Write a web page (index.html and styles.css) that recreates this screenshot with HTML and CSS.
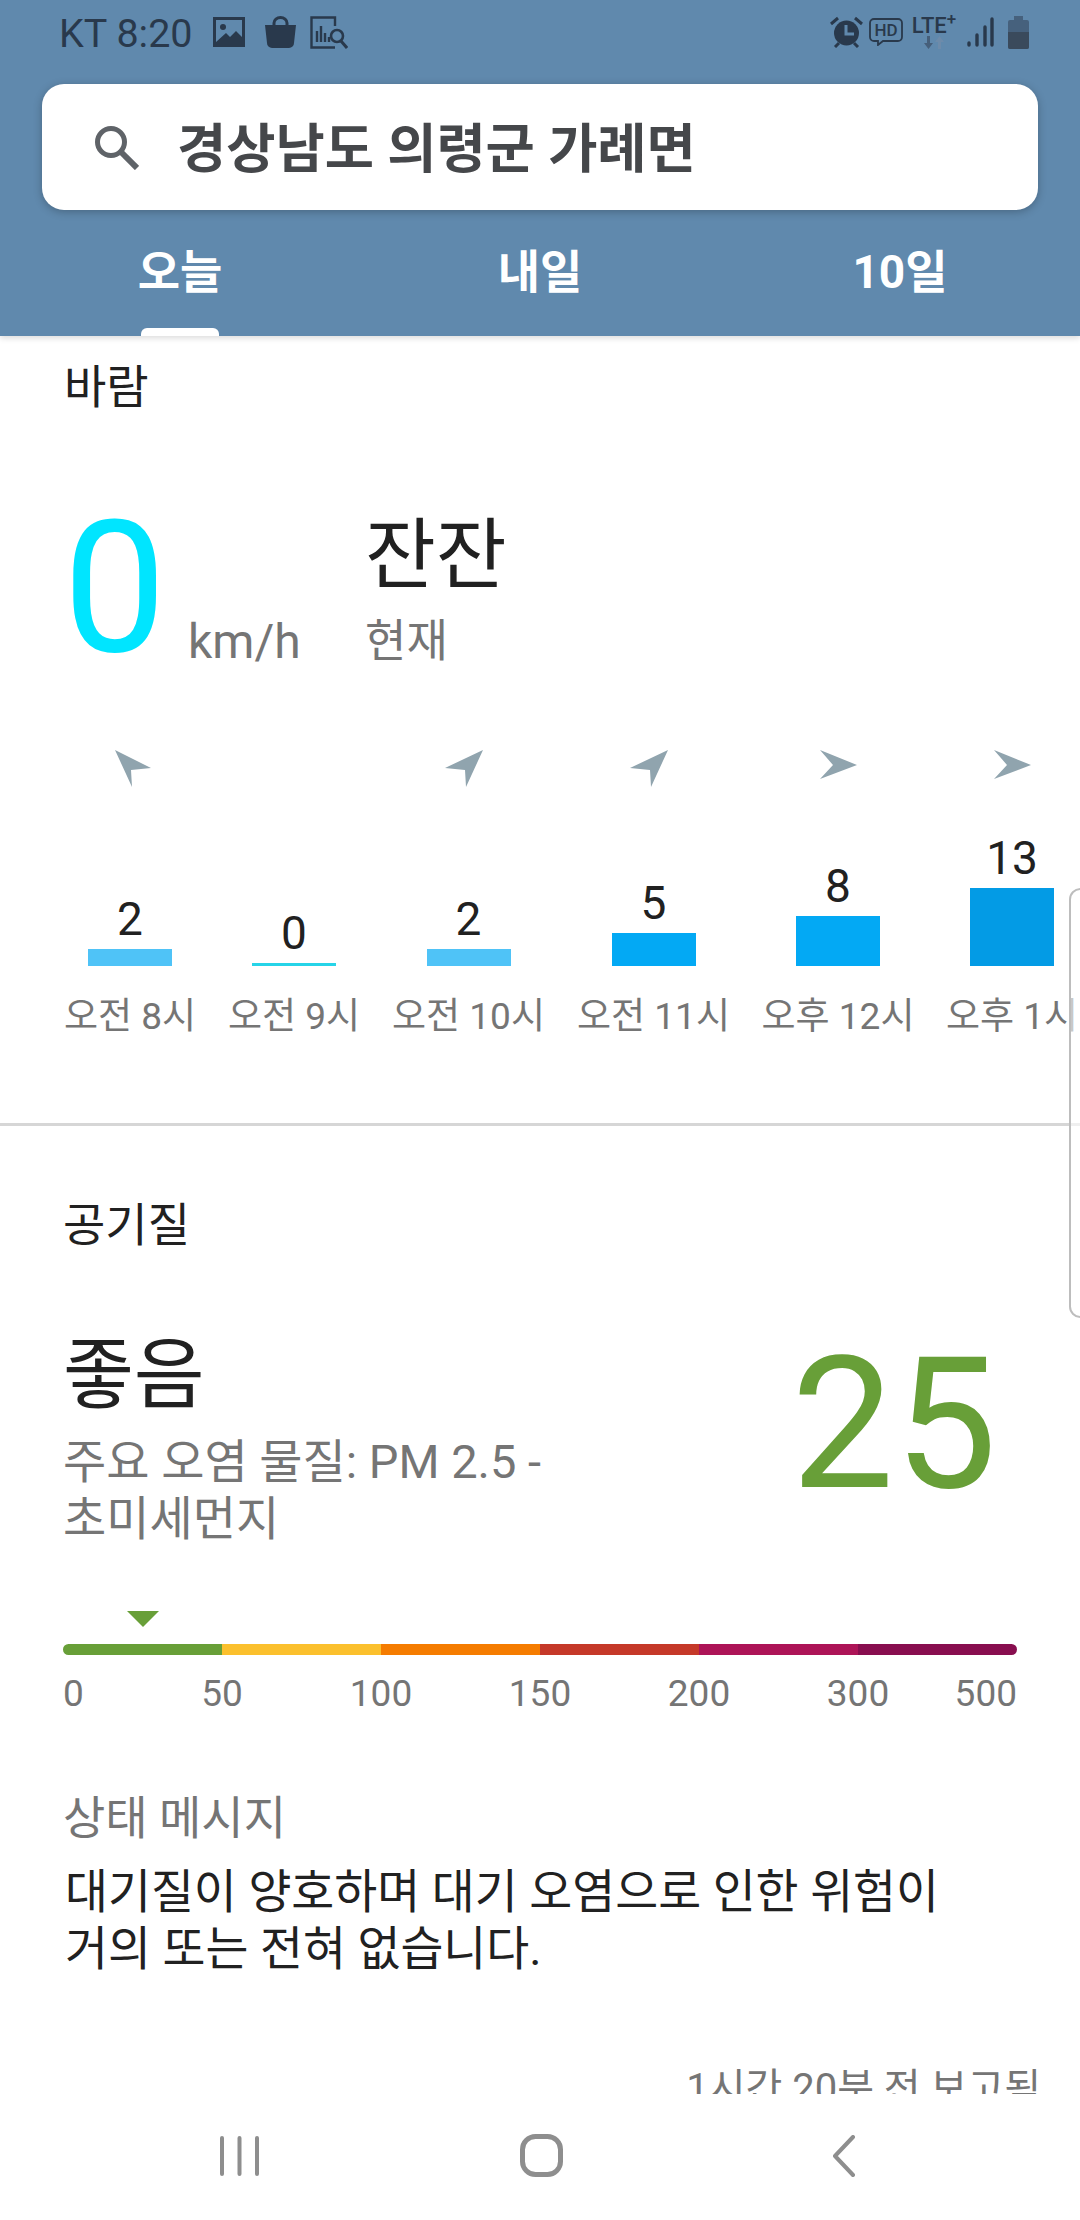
FILE: index.html
```html
<!DOCTYPE html>
<html lang="ko">
<head>
    <meta charset="UTF-8">
    <meta name="viewport" content="width=device-width, initial-scale=1.0">
    <title>바람 및 공기질</title>
    <link rel="stylesheet" href="styles.css">
</head>
<body>
    <div class="screen">

        <header class="top">
            <div class="status">
                <div class="status-left">
                    <span class="status-time">KT 8:20</span>
                    <svg class="ic-image" width="32" height="30" viewBox="0 0 32 30"><path fill="#29394c" d="M0 0h32v30H0z"/><path fill="#6089ad" d="M3 3h26v17l-6-6-6 6-4-4-10 9z"/><circle cx="10" cy="10" r="3" fill="#29394c"/></svg>
                    <svg class="ic-bag" width="31" height="32" viewBox="0 0 31 32"><path fill="none" stroke="#29394c" stroke-width="3" d="M9 10V7a6.500 5.500 0 0 1 13 0v3"/><path fill="#29394c" d="M0 9h31l-2 18a5 5 0 0 1-5 5H7a5 5 0 0 1-5-5z"/></svg>
                    <svg class="ic-chart" width="38" height="33" viewBox="0 0 38 33"><path fill="none" stroke="#29394c" stroke-width="2.400" d="M25 10V1.500H1.500v30H25"/><path fill="none" stroke="#29394c" stroke-width="2.400" d="M7 26V15M11 26V10M15 26V17M19 26v-5"/><circle cx="27" cy="20" r="6" fill="none" stroke="#29394c" stroke-width="2.600"/><path stroke="#29394c" stroke-width="3" d="M31 25l6 7"/></svg>
                </div>
                <div class="status-right">
                    <svg width="33" height="32" viewBox="0 0 33 32"><circle cx="16.500" cy="17" r="12.500" fill="#29394c"/><path stroke="#6089ad" stroke-width="3" fill="none" d="M16 9v9h8"/><path stroke="#29394c" stroke-width="3" fill="none" d="M1 8l7-6M32 8l-7-6M5 31l4-4M28 31l-4-4"/></svg>
                    <svg width="34" height="28" viewBox="0 0 34 28"><path fill="none" stroke="#29394c" stroke-width="1.800" d="M5 1h24a4 4 0 0 1 4 4v14a4 4 0 0 1-4 4H14l-5 4v-4H5a4 4 0 0 1-4-4V5a4 4 0 0 1 4-4z"/><text x="17" y="18" class="hd-text">HD</text></svg>
                    <div class="lte">
                        <span class="lte-text">LTE<sup>+</sup></span>
                        <svg width="20" height="13" viewBox="0 0 20 13"><path fill="#465f7a" d="M3 0h3v7h3l-4.500 6L0 7h3z"/><path fill="#6d8baa" d="M14 13h3V6h3l-4.500-6L11 6h3z"/></svg>
                    </div>
                    <svg width="27" height="30" viewBox="0 0 27 30"><g stroke="#29394c" stroke-width="3.400" stroke-linecap="round"><path d="M2 28v-2M10 28V18M18 28V10M25 28V2"/></g></svg>
                    <svg class="ic-battery" width="21" height="33" viewBox="0 0 21 33"><path fill="#46617d" d="M6 0h9v4h4a2 2 0 0 1 2 2v25a2 2 0 0 1-2 2H2a2 2 0 0 1-2-2V6a2 2 0 0 1 2-2h4z"/><path fill="#3a4a5c" d="M0 16h21v15a2 2 0 0 1-2 2H2a2 2 0 0 1-2-2z"/></svg>
                </div>
            </div>

            <div class="search">
                <svg class="search-icon" width="46" height="46" viewBox="0 0 46 46"><circle cx="18" cy="18" r="13.500" fill="none" stroke="#5f6368" stroke-width="5"/><path stroke="#5f6368" stroke-width="6" d="M28 28l16 16"/></svg>
                <span class="search-text">경상남도 의령군 가례면</span>
            </div>

            <nav class="tabs">
                <div class="tab tab-active">오늘</div>
                <div class="tab">내일</div>
                <div class="tab">10일</div>
            </nav>
        </header>

        <main class="content">
            <section class="wind">
                <h2 class="section-title">바람</h2>

                <div class="wind-now">
                    <div class="wind-speed">0</div>
                    <div class="wind-unit">km/h</div>
                    <div class="wind-desc">
                        <div class="wind-word">잔잔</div>
                        <div class="wind-when">현재</div>
                    </div>
                </div>

                <div class="hours">
                    <div class="hour">
                        <div class="arrow-slot"><svg class="arrow arrow-nw" width="36" height="37" viewBox="0 0 36 37"><path d="M0 0l36 18-20 2 1 17z"/></svg></div>
                        <div class="bar-slot"><span class="val">2</span><div class="bar bar-2"></div></div>
                        <div class="hour-label">오전 8시</div>
                    </div>
                    <div class="hour">
                        <div class="arrow-slot"></div>
                        <div class="bar-slot"><span class="val">0</span><div class="bar bar-0"></div></div>
                        <div class="hour-label">오전 9시</div>
                    </div>
                    <div class="hour">
                        <div class="arrow-slot"><svg class="arrow arrow-ne" width="38" height="37" viewBox="0 0 38 37"><path d="M38 0L0 18l20 2 1 17z"/></svg></div>
                        <div class="bar-slot"><span class="val">2</span><div class="bar bar-2"></div></div>
                        <div class="hour-label">오전 10시</div>
                    </div>
                    <div class="hour">
                        <div class="arrow-slot"><svg class="arrow arrow-ne" width="38" height="37" viewBox="0 0 38 37"><path d="M38 0L0 18l20 2 1 17z"/></svg></div>
                        <div class="bar-slot"><span class="val">5</span><div class="bar bar-5"></div></div>
                        <div class="hour-label">오전 11시</div>
                    </div>
                    <div class="hour">
                        <div class="arrow-slot arrow-slot-flat"><svg class="arrow" width="37" height="29" viewBox="0 0 37 29"><path d="M0 0l37 15L0 29l13-14z"/></svg></div>
                        <div class="bar-slot"><span class="val">8</span><div class="bar bar-8"></div></div>
                        <div class="hour-label">오후 12시</div>
                    </div>
                    <div class="hour">
                        <div class="arrow-slot arrow-slot-flat"><svg class="arrow" width="37" height="29" viewBox="0 0 37 29"><path d="M0 0l37 15L0 29l13-14z"/></svg></div>
                        <div class="bar-slot"><span class="val">13</span><div class="bar bar-13"></div></div>
                        <div class="hour-label">오후 1시</div>
                    </div>
                </div>
            </section>

            <section class="air">
                <h2 class="section-title">공기질</h2>

                <div class="air-main">
                    <div class="air-text">
                        <div class="air-word">좋음</div>
                        <div class="air-sub">주요 오염 물질: PM 2.5 -<br>초미세먼지</div>
                    </div>
                    <div class="air-num">25</div>
                </div>

                <div class="scale">
                    <div class="scale-mark"></div>
                    <div class="scale-bar">
                        <div class="seg seg-1"></div>
                        <div class="seg seg-2"></div>
                        <div class="seg seg-3"></div>
                        <div class="seg seg-4"></div>
                        <div class="seg seg-5"></div>
                        <div class="seg seg-6"></div>
                    </div>
                    <div class="scale-nums">
                        <span class="num-first">0</span><span>50</span><span>100</span><span>150</span><span>200</span><span>300</span><span class="num-last">500</span>
                    </div>
                </div>

                <div class="msg-title">상태 메시지</div>
                <p class="msg">대기질이 양호하며 대기 오염으로 인한 위험이<br>거의 또는 전혀 없습니다.</p>
                <div class="reported">1시간 20분 전 보고됨</div>
            </section>

            <div class="edge-handle"></div>
        </main>

        <footer class="navbar">
            <svg width="40" height="40" viewBox="0 0 40 40"><path stroke="#8e8e8e" stroke-width="4" stroke-linecap="round" d="M2 2v36M19.500 2v36M37 2v36"/></svg>
            <svg width="44" height="44" viewBox="0 0 44 44"><rect x="2.500" y="2.500" width="38" height="38" rx="13" fill="none" stroke="#8e8e8e" stroke-width="5"/></svg>
            <svg class="nav-back" width="24" height="42" viewBox="0 0 24 42"><path fill="none" stroke="#8e8e8e" stroke-width="4" stroke-linecap="round" stroke-linejoin="round" d="M21 2L3 21l18 19"/></svg>
        </footer>

    </div>
</body>
</html>
```

FILE: styles.css
```css
* {
    box-sizing: border-box;
}

html, body {
    margin: 0;
    padding: 0;
}

body {
    font-family: Roboto, "Noto Sans CJK KR", sans-serif;
    background-color: white;
}

.screen {
    width: 1080px;
    height: 2220px;
    display: flex;
    flex-direction: column;
    overflow: hidden;
}

/* Blue header */
.top {
    height: 336px;
    flex-shrink: 0;
    background-color: #6089ad;
    box-shadow: 0 2px 6px rgba(0, 0, 0, 0.15);
    position: relative;
    z-index: 2;
}

.status {
    height: 68px;
    padding: 0 51px 4px 59px;
    display: flex;
    justify-content: space-between;
    align-items: center;
}

.status-left, .status-right {
    display: flex;
    align-items: center;
}

.status-left {
    gap: 20px;
}

.status-right {
    gap: 6px;
}

.ic-chart {
    margin-left: -6px;
}

.ic-battery {
    margin-left: 8px;
}

.status-time {
    padding-top: 4px;
    font-size: 39.5px;
    line-height: 46px;
    color: #29394c;
}

.hd-text {
    font-size: 17px;
    font-weight: 500;
    fill: #29394c;
    text-anchor: middle;
}

.lte {
    width: 50px;
    display: flex;
    flex-direction: column;
    align-items: center;
    margin-right: 2px;
}

.lte-text {
    font-size: 22px;
    line-height: 20px;
    font-weight: 500;
    color: #29394c;
    white-space: nowrap;
}

.lte-text sup {
    font-size: 17px;
    line-height: 0;
}

.search {
    height: 126px;
    margin: 16px 42px 0;
    padding-left: 51px;
    display: flex;
    align-items: center;
    gap: 38px;
    background-color: white;
    border-radius: 22px;
    box-shadow: 0 2px 8px rgba(0, 0, 0, 0.25);
}

.search-text {
    padding-bottom: 6px;
    font-size: 53.5px;
    font-weight: 700;
    color: #45474a;
    white-space: nowrap;
}

.tabs {
    display: flex;
    height: 126px;
}

.tab {
    flex: 1;
    padding-top: 31px;
    text-align: center;
    font-size: 46px;
    line-height: 62px;
    font-weight: 700;
    color: white;
    position: relative;
}

.tab-active::after {
    content: "";
    position: absolute;
    left: 141px;
    bottom: 0;
    width: 78px;
    height: 8px;
    background-color: white;
    border-radius: 6px 6px 0 0;
}

/* Scrolling content */
.content {
    flex: 1;
    overflow: hidden;
    position: relative;
}

.section-title {
    margin: 0;
    font-size: 46px;
    line-height: 50px;
    font-weight: 400;
    color: #212121;
}

.wind {
    height: 790px;
    padding: 26px 0 0 64px;
    border-bottom: 3px solid #d6d6d6;
}

.wind-now {
    height: 235px;
    margin-top: 91px;
    display: flex;
    align-items: flex-start;
}

.wind-speed {
    width: 125px;
    margin: -5px 0 0 -1px;
    font-size: 184px;
    line-height: 180px;
    color: #00e5ff;
}

.wind-unit {
    width: 177px;
    padding-top: 111px;
    font-size: 48px;
    line-height: 56px;
    color: #757575;
}

.wind-desc {
    padding-top: 8px;
}

.wind-word {
    font-size: 77px;
    line-height: 90px;
    color: #212121;
}

.wind-when {
    margin-top: 11px;
    font-size: 45px;
    line-height: 60px;
    color: #757575;
}

.hours {
    margin-left: -64px;
    width: 1080px;
    padding-left: 48px;
    display: grid;
    grid-template-columns: 164px 164px 185px 185px 184px 164px;
}

.hour {
    display: flex;
    flex-direction: column;
    align-items: center;
}

.arrow-slot {
    height: 60px;
    display: flex;
    align-items: center;
    justify-content: center;
}

.arrow-slot-flat {
    padding-bottom: 8px;
}

.arrow {
    fill: #90a4ae;
}

.arrow-nw {
    margin-left: 6px;
}

.arrow-ne {
    margin-right: 9px;
}

.bar-slot {
    height: 168px;
    display: flex;
    flex-direction: column;
    justify-content: flex-end;
    align-items: center;
}

.val {
    font-size: 46px;
    line-height: 54px;
    margin-bottom: 3px;
    color: #212121;
}

.bar {
    width: 84px;
}

.bar-0 {
    height: 3px;
    background-color: #26d4e8;
}

.bar-2 {
    height: 17px;
    background-color: #4fc3f7;
}

.bar-5 {
    height: 33px;
    background-color: #03a9f4;
}

.bar-8 {
    height: 50px;
    background-color: #03a9f4;
}

.bar-13 {
    height: 78px;
    background-color: #039be5;
}

.hour-label {
    margin-top: 29px;
    font-size: 37px;
    line-height: 44px;
    color: #757575;
    white-space: nowrap;
}

/* Air quality */
.air {
    padding: 74px 62px 0 63px;
}

.air-main {
    margin-top: 84px;
    display: flex;
    justify-content: space-between;
    align-items: flex-start;
}

.air-word {
    font-size: 77px;
    line-height: 84px;
    color: #212121;
}

.air-sub {
    margin-top: 15px;
    font-size: 47px;
    line-height: 57px;
    color: #757575;
    white-space: nowrap;
}

.air-num {
    margin: 6px 21px 0 0;
    font-size: 183px;
    line-height: 170px;
    color: #689f38;
}

.scale {
    margin-top: 64px;
}

.scale-mark {
    width: 0;
    height: 0;
    margin-left: 64px;
    border-left: 16.5px solid transparent;
    border-right: 16.5px solid transparent;
    border-top: 16px solid #689f38;
}

.scale-bar {
    margin-top: 17px;
    height: 11px;
    width: 954px;
    display: flex;
    border-radius: 6px;
    overflow: hidden;
}

.seg {
    flex: 1;
}

.seg-1 {
    background-color: #689f38;
}

.seg-2 {
    background-color: #fbc02d;
}

.seg-3 {
    background-color: #f57c00;
}

.seg-4 {
    background-color: #c53929;
}

.seg-5 {
    background-color: #ad1457;
}

.seg-6 {
    background-color: #880e4f;
}

.scale-nums {
    margin-top: 17px;
    width: 954px;
    display: flex;
    font-size: 37px;
    line-height: 44px;
    color: #757575;
}

.scale-nums span {
    width: 159px;
    text-align: center;
}

.scale-nums .num-first {
    width: 79.5px;
    text-align: left;
}

.scale-nums .num-last {
    width: 79.5px;
    text-align: right;
}

.msg-title {
    margin-top: 76px;
    font-size: 46px;
    line-height: 52px;
    color: #757575;
}

.msg {
    margin: 20px 0 0 2px;
    font-size: 46.7px;
    line-height: 57px;
    color: #212121;
    white-space: nowrap;
}

.reported {
    margin: 87px -23px 0 0;
    text-align: right;
    font-size: 40px;
    line-height: 48px;
    color: #757575;
}

.edge-handle {
    position: absolute;
    top: 552px;
    right: -12px;
    width: 23px;
    height: 430px;
    border: 2px solid #bdbdbd;
    border-radius: 14px;
    background-color: rgba(255, 255, 255, 0.6);
}

/* Android nav buttons */
.navbar {
    height: 126px;
    flex-shrink: 0;
    background-color: white;
    position: relative;
    z-index: 2;
    display: flex;
    align-items: center;
    gap: 260px;
    padding: 0 0 2px 220px;
}

.nav-back {
    margin-left: 8px;
}
```
